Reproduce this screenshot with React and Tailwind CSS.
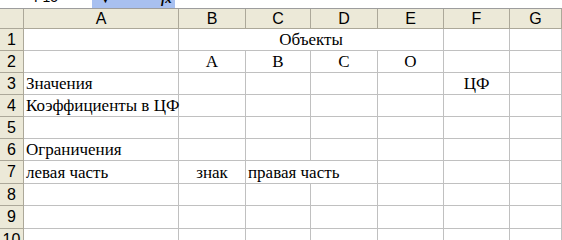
import React from "react";

const COLS = [
  { k: "A", w: 155 },
  { k: "B", w: 67 },
  { k: "C", w: 65 },
  { k: "D", w: 67 },
  { k: "E", w: 66 },
  { k: "F", w: 66 },
  { k: "G", w: 52 },
];

const W = Object.fromEntries(COLS.map((c) => [c.k, c.w]));

const ROWS = [
  { n: 1, h: 22, cells: [{ s: ["A"] }, { s: ["B", "C", "D", "E"], t: "Объекты", a: "center" }, { s: ["F"] }, { s: ["G"] }] },
  { n: 2, h: 22, cells: [{ s: ["A"] }, { s: ["B"], t: "A", a: "center" }, { s: ["C"], t: "B", a: "center" }, { s: ["D"], t: "C", a: "center" }, { s: ["E"], t: "O", a: "center" }, { s: ["F"] }, { s: ["G"] }] },
  { n: 3, h: 22, cells: [{ s: ["A"], t: "Значения" }, { s: ["B"] }, { s: ["C"] }, { s: ["D"] }, { s: ["E"] }, { s: ["F"], t: "ЦФ", a: "center" }, { s: ["G"] }] },
  { n: 4, h: 22, cells: [{ s: ["A"], t: "Коэффициенты в ЦФ" }, { s: ["B"] }, { s: ["C"] }, { s: ["D"] }, { s: ["E"] }, { s: ["F"] }, { s: ["G"] }] },
  { n: 5, h: 22, cells: [{ s: ["A"] }, { s: ["B"] }, { s: ["C"] }, { s: ["D"] }, { s: ["E"] }, { s: ["F"] }, { s: ["G"] }] },
  { n: 6, h: 22, cells: [{ s: ["A"], t: "Ограничения" }, { s: ["B"] }, { s: ["C"] }, { s: ["D"] }, { s: ["E"] }, { s: ["F"] }, { s: ["G"] }] },
  { n: 7, h: 23, cells: [{ s: ["A"], t: "левая часть" }, { s: ["B"], t: "знак", a: "center" }, { s: ["C", "D"], t: "правая часть" }, { s: ["E"] }, { s: ["F"] }, { s: ["G"] }] },
  { n: 8, h: 22, cells: [{ s: ["A"] }, { s: ["B"] }, { s: ["C"] }, { s: ["D"] }, { s: ["E"] }, { s: ["F"] }, { s: ["G"] }] },
  { n: 9, h: 23, cells: [{ s: ["A"] }, { s: ["B"] }, { s: ["C"] }, { s: ["D"] }, { s: ["E"] }, { s: ["F"] }, { s: ["G"] }] },
  { n: 10, h: 22, cells: [{ s: ["A"] }, { s: ["B"] }, { s: ["C"] }, { s: ["D"] }, { s: ["E"] }, { s: ["F"] }, { s: ["G"] }] },
];

const serif = { fontFamily: '"Liberation Serif", "Times New Roman", serif' };
const sans = { fontFamily: '"Liberation Sans", Arial, sans-serif' };

export default function App() {
  return (
    <div className="w-[562px] h-[240px] overflow-hidden bg-white relative">
      {/* formula bar remnant */}
      <div className="flex h-[9px] border-b border-[#9d9d9d] overflow-hidden" style={sans}>
        <div className="w-[92px] h-full bg-white relative overflow-hidden">
          <span className="absolute left-[34px] top-[-10px] text-[14px] leading-[14px] text-black">F15</span>
        </div>
        <div className="w-[83px] h-full bg-[#a8c0f0] relative overflow-hidden">
          <span className="absolute left-[9px] top-[-4px] text-[9px] leading-[9px] text-black">▼</span>
          <span className="absolute left-[69px] top-[-8px] text-[13px] leading-[13px] italic font-bold text-black" style={serif}>fx</span>
        </div>
        <div className="flex-1 h-full bg-white" />
      </div>

      {/* column headers */}
      <div className="flex h-[20px]" style={sans}>
        <div className="w-[24px] h-full bg-[#ece9d8] border-r border-b border-[#aca899]" />
        {COLS.map((c) => (
          <div
            key={c.k}
            className="h-full bg-[#ece9d8] border-r border-b border-[#aca899] flex items-center justify-center text-[16px] leading-none text-black"
            style={{ width: c.w }}
          >
            {c.k}
          </div>
        ))}
      </div>

      {/* rows */}
      {ROWS.map((r) => (
        <div key={r.n} className="flex" style={{ height: r.h }}>
          <div
            className="w-[24px] h-full shrink-0 bg-[#ece9d8] border-r border-b border-[#aca899] flex items-center justify-center text-[16px] leading-none text-black"
            style={sans}
          >
            {r.n}
          </div>
          {r.cells.map((c, i) => {
            const w = c.s.reduce((a, k) => a + W[k], 0);
            return (
              <div
                key={i}
                className={
                  "h-full shrink-0 border-r border-b border-[#c0c0c0] flex items-end pb-[1px] whitespace-nowrap text-[17px] leading-[19px] text-black " +
                  (c.a === "center" ? "justify-center" : "justify-start pl-[2px]")
                }
                style={{ width: w, ...serif }}
              >
                {c.t || ""}
              </div>
            );
          })}
        </div>
      ))}
    </div>
  );
}
